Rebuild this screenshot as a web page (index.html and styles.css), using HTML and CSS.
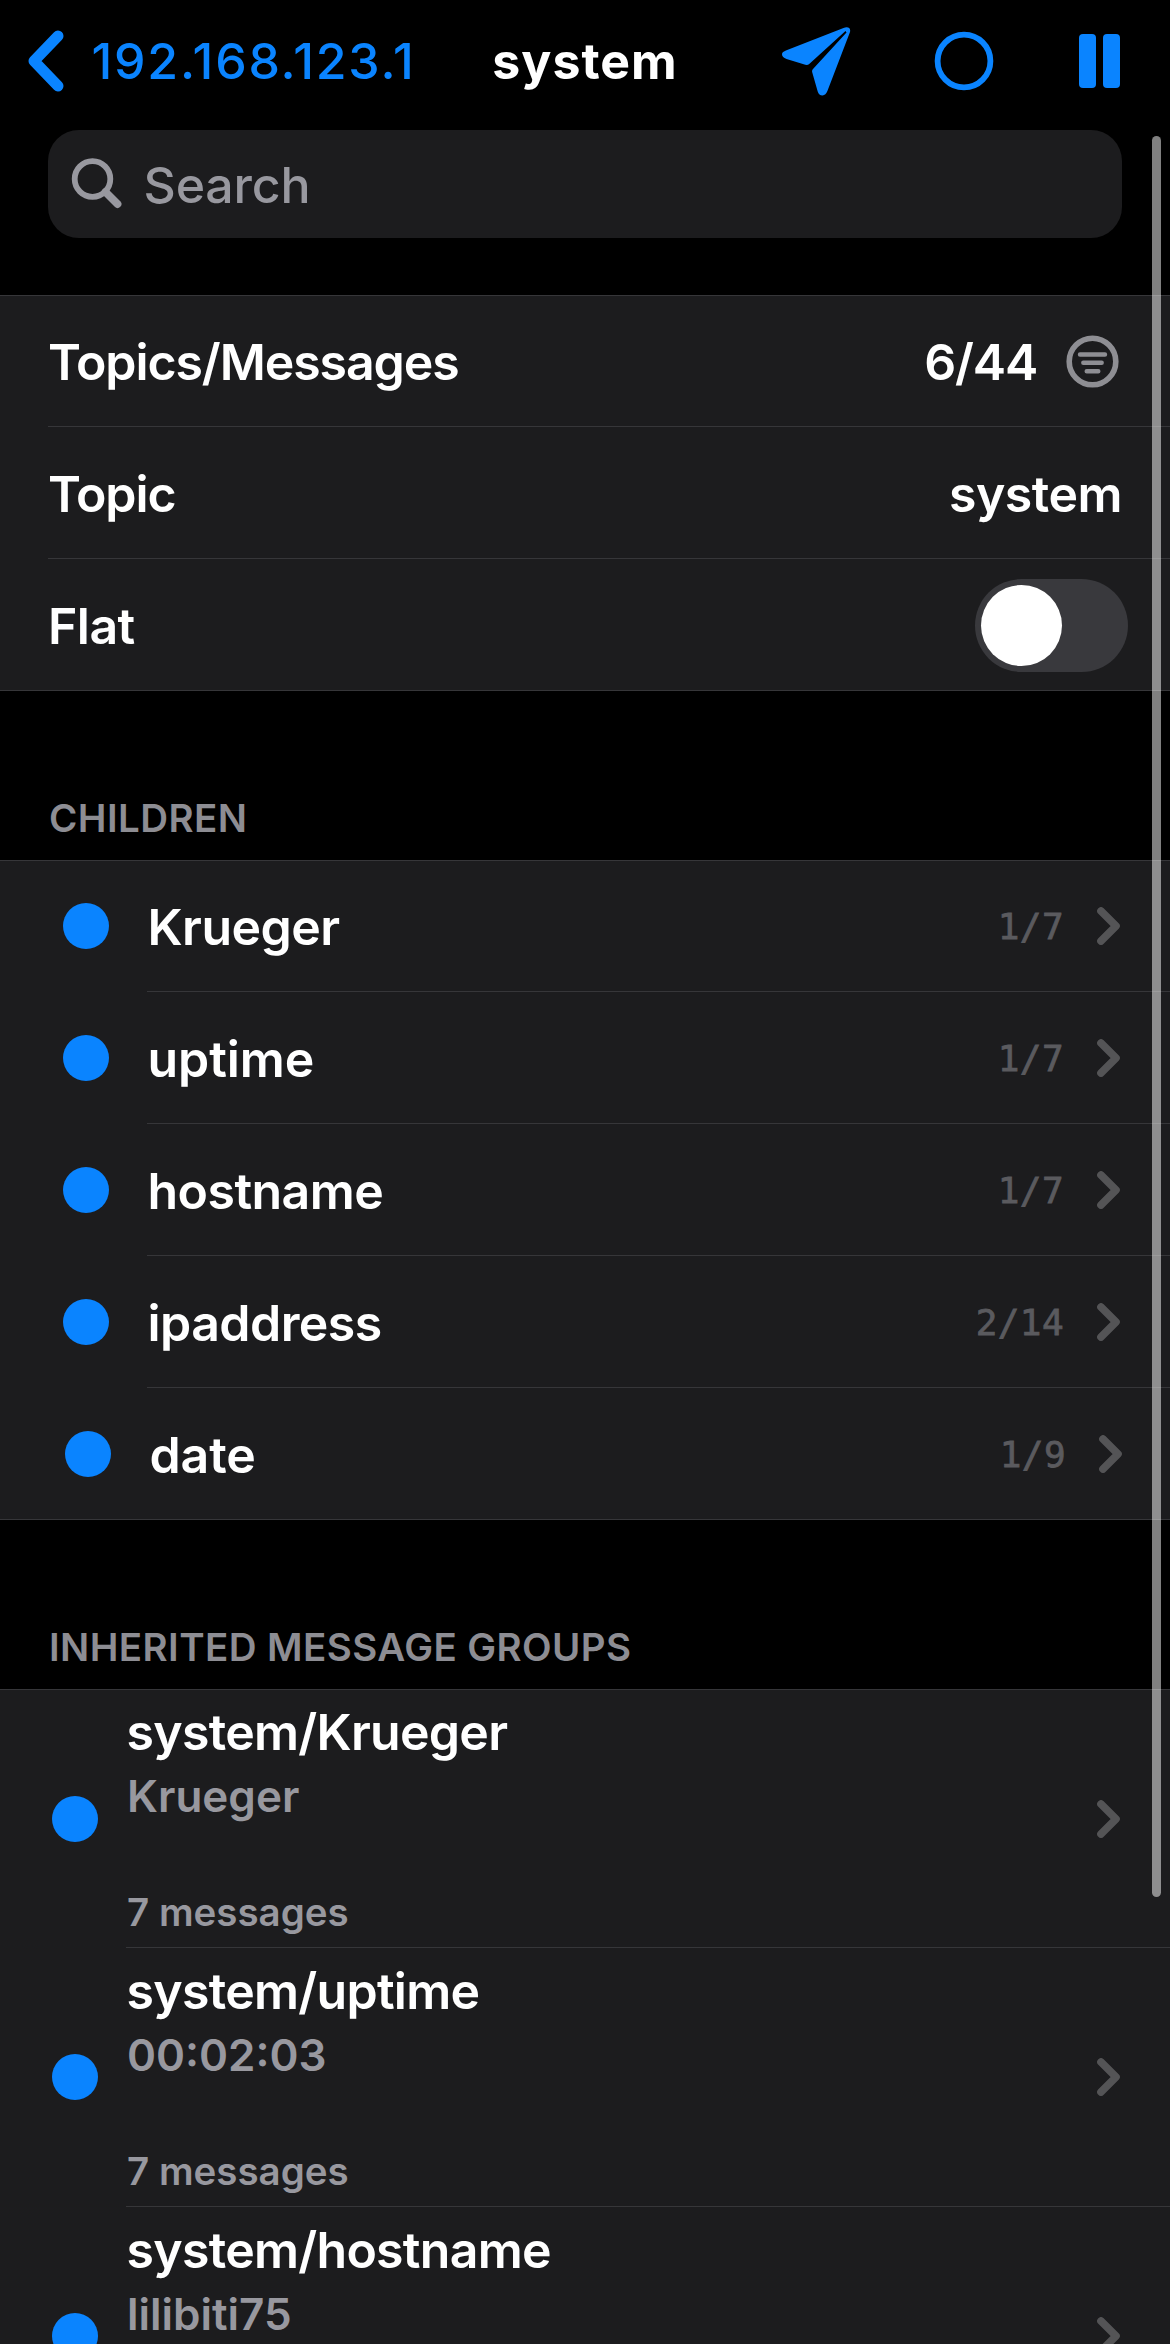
FILE: index.html
```
<!DOCTYPE html>
<html lang="en">
<head>
<meta charset="utf-8">
<title>system</title>
<link rel="stylesheet" href="styles.css">
</head>
<body>
<svg class="defs" width="0" height="0">
  <symbol id="chevron" viewBox="0 0 24 38"><path d="M4 4 19 19 4 34" fill="none" stroke="#545456" stroke-width="7.6" stroke-linecap="round" stroke-linejoin="round"/></symbol>
</svg>
<div class="screen">
  <header class="nav">
    <a class="back">
      <svg width="38" height="62" viewBox="0 0 38 62"><path d="M31 6 7 31 31 56" fill="none" stroke="#0a84ff" stroke-width="11" stroke-linecap="round" stroke-linejoin="round"/></svg>
      <span class="back-label">192.168.123.1</span>
    </a>
    <h1 class="title">system</h1>
    <div class="actions">
      <svg class="send" width="69" height="69" viewBox="0 0 69 69" fill="#0a84ff"><path d="M63.500 4 27.500 36.700Q25.700 38.400 23.300 37.800L4.500 32C1.500 31 0 29.600 0 27.300C0 25.200 1.400 24.500 4.500 23.200L61.500 1C65.500-.5 69 .6 68 5L45.500 63.800C44.300 67 42.700 68.400 40.500 68.400C38 68.400 36.500 67 35.700 64.500L30.200 45.200Q29.700 43.200 31 41.900L64.500 5.500Z"/></svg>
      <svg class="ring" width="60" height="60" viewBox="0 0 60 60"><circle cx="30" cy="30" r="26.400" fill="none" stroke="#0a84ff" stroke-width="5.800"/></svg>
      <svg class="pause" width="41" height="54" viewBox="0 0 41 54" fill="#0a84ff"><rect width="17" height="54" rx="4"/><rect x="24" width="17" height="54" rx="4"/></svg>
    </div>
  </header>
  <div class="search">
    <svg width="52" height="52" viewBox="0 0 52 52" fill="none" stroke="#98989f" stroke-linecap="round"><circle cx="21.500" cy="21" r="17.800" stroke-width="5.800"/><path d="M34.500 34 46.500 46" stroke-width="7.800"/></svg>
    <span class="placeholder">Search</span>
  </div>

  <section class="group info">
    <div class="row"><span class="label topics">Topics/Messages</span><span class="value ratio">6/44</span>
      <svg class="filter" width="53" height="53" viewBox="0 0 53 53" fill="none" stroke="#8e8e93" stroke-linecap="round"><circle cx="26.500" cy="26.500" r="23.300" stroke-width="5.600"/><path d="M14 19.500H39M17.300 27.700H35.700M20.700 36.200H32.300" stroke-width="4.400"/></svg>
    </div>
    <div class="row"><span class="label topics">Topic</span><span class="value">system</span></div>
    <div class="row"><span class="label">Flat</span><span class="switch"><span class="knob"></span></span></div>
  </section>

  <h2 class="heading">CHILDREN</h2>
  <section class="group children">
    <div class="row"><i class="dot"></i><span class="label">Krueger</span><span class="count">1/7</span><svg class="chev"><use href="#chevron"/></svg></div>
    <div class="row"><i class="dot"></i><span class="label loose">uptime</span><span class="count">1/7</span><svg class="chev"><use href="#chevron"/></svg></div>
    <div class="row"><i class="dot"></i><span class="label">hostname</span><span class="count">1/7</span><svg class="chev"><use href="#chevron"/></svg></div>
    <div class="row"><i class="dot"></i><span class="label">ipaddress</span><span class="count">2/14</span><svg class="chev"><use href="#chevron"/></svg></div>
    <div class="row nudged"><i class="dot"></i><span class="label loose">date</span><span class="count">1/9</span><svg class="chev"><use href="#chevron"/></svg></div>
  </section>

  <h2 class="heading">INHERITED MESSAGE GROUPS</h2>
  <section class="group messages">
    <div class="entry"><i class="dot"></i><div class="text"><span class="topic">system/Krueger</span><span class="payload">Krueger</span><span class="total">7 messages</span></div><svg class="chev"><use href="#chevron"/></svg></div>
    <div class="entry"><i class="dot"></i><div class="text"><span class="topic">system/uptime</span><span class="payload">00:02:03</span><span class="total">7 messages</span></div><svg class="chev"><use href="#chevron"/></svg></div>
    <div class="entry"><i class="dot"></i><div class="text"><span class="topic">system/hostname</span><span class="payload">lilibiti75</span></div><svg class="chev"><use href="#chevron"/></svg></div>
  </section>
  <div class="scrollbar"></div>
</div>
</body>
</html>
```
FILE: styles.css
```
* { box-sizing: border-box; }
body { margin: 0; background: #000; color: #fff; font-family: Inter, sans-serif; }
svg { display: block; flex: none; }
.defs { position: absolute; }
.screen { position: relative; height: 2344px; overflow: hidden; font-size: 50px; font-weight: 600; line-height: 60px; }
.screen span { white-space: nowrap; }

.nav { display: grid; grid-template-columns: 1fr auto 1fr; align-items: center; height: 122px; padding: 0 50px; }
.back { display: flex; align-items: center; gap: 26.500px; margin-left: -23px; color: #0a84ff; }
.back-label { font-weight: 500; letter-spacing: 1.810px; }
.title { margin: 0; font-size: 50px; line-height: 60px; font-weight: 700; letter-spacing: 1.040px; }
.actions { display: flex; align-items: center; justify-content: flex-end; }
.ring { margin-left: 83px; }
.pause { margin-left: 85px; }

.search { display: flex; align-items: center; gap: 20.500px; height: 108px; margin: 8px 48px 57px; padding-left: 23px; border-radius: 31px; background: #1c1c1e; color: #98989f; }
.placeholder { padding-top: 2px; font-weight: 500; letter-spacing: -0.150px; }

.group { border-top: 1px solid #363639; border-bottom: 1px solid #363639; background: #1c1c1e; }
.row { display: flex; align-items: center; height: 132px; margin-left: 48px; padding-right: 48px; }
.row:first-child { height: 130px; }
.row + .row { border-top: 1px solid #363639; }
.label { flex: 1; padding-top: 2px; letter-spacing: -0.550px; }
.topics { letter-spacing: -1.100px; }
.loose { letter-spacing: -0.080px; }
.value { padding-top: 2px; letter-spacing: -0.520px; }
.ratio { letter-spacing: -1.200px; }
.filter { margin-left: 29px; margin-right: 3px; }
.switch { width: 153px; height: 93px; margin: 1px -6px 0 0; padding: 6px; border-radius: 47px; background: #39393d; }
.knob { display: block; width: 81px; height: 81px; border-radius: 50%; background: #fff; }

.heading { display: flex; align-items: flex-end; height: 169px; margin: 0; padding: 0 48px 19px 49px; color: #8d8d93; font-size: 38.500px; font-weight: 600; letter-spacing: 0.420px; line-height: 46px; }

.dot { flex: none; width: 46px; height: 46px; border-radius: 50%; background: #0a84ff; }
.chev { width: 24px; height: 38px; }
.children .row { margin-left: 147px; padding-right: 49px; }
.children .dot { margin-left: -84px; margin-right: 38.500px; }
.children .nudged .dot { margin-left: -82px; }
.children .nudged { padding-right: 47px; }
.count { margin-right: 33px; padding-top: 2px; color: #5a5a5e; font: 36px/46px "DejaVu Sans Mono", monospace; letter-spacing: 0.400px; -webkit-text-stroke: 0.800px #5a5a5e; }

.entry { display: flex; align-items: center; height: 259px; margin-left: 126px; padding-right: 49px; }
.entry:first-child { height: 257px; }
.entry + .entry { border-top: 1px solid #363639; }
.messages .dot { margin-left: -74px; margin-right: 28.500px; }
.text { display: flex; flex: 1; flex-direction: column; align-self: stretch; padding-top: 12px; }
.entry + .entry .text { padding-top: 13px; }
.topic { letter-spacing: -0.720px; }
.payload { margin: 7px 0 0 0.500px; color: #98989f; font-size: 44px; line-height: 54px; }
.total { margin: 66px 0 0 0.500px; color: #98989f; font-size: 38.500px; line-height: 46px; }

.scrollbar { position: absolute; left: 1152px; top: 136px; width: 9px; height: 1761px; border-radius: 5px; background: rgba(255, 255, 255, .5); }
```
